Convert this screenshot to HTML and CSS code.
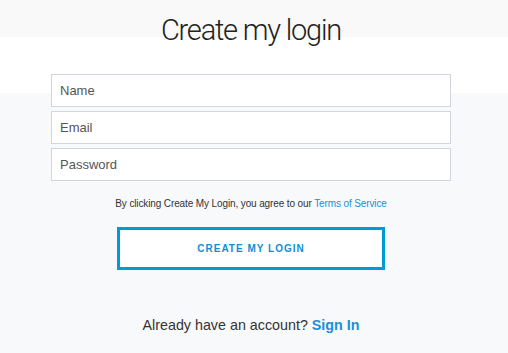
FILE: index.html
```html
<!DOCTYPE html>
<html lang="en">
  <head>
    <meta charset="UTF-8" />
    <meta name="viewport" content="width=device-width, initial-scale=1.0" />
    <title>Create my login</title>
    <link rel="stylesheet" href="styles.css">
  </head>
  <body>
    <div class="page">
      <h1>Create my login</h1>

      <form class="signup-form" onsubmit="return false">
        <input type="text" placeholder="Name" />
        <input type="email" placeholder="Email" />
        <input type="password" placeholder="Password" />

        <p class="terms">
          By clicking Create My Login, you agree to our
          <a href="#">Terms of Service</a>
        </p>

        <button class="create-btn" type="submit">Create my login</button>
      </form>

      <p class="signin">
        Already have an account? <a href="#">Sign In</a>
      </p>
    </div>
  </body>
</html>
```

FILE: styles.css
```css
body {
  font-family: "Liberation Sans", Arial, Helvetica, sans-serif;
  margin: 0;
  padding: 0;
  color: #333;
  background: linear-gradient(
    to bottom,
    #f9f9f9 0,
    #f9f9f9 37px,
    #ffffff 37px,
    #ffffff 93px,
    #f8f9fb 93px
  );
  min-height: 353px;
}

.page {
  width: 502px;
  display: flex;
  flex-direction: column;
  align-items: center;
}

h1 {
  font-family: Roboto, "Liberation Sans", sans-serif;
  font-weight: 300;
  font-size: 29px;
  letter-spacing: -1.2px;
  line-height: 36px;
  color: #222;
  margin: 0;
  padding-top: 12px;
}

.signup-form {
  width: 400px;
  margin-top: 26px;
  display: flex;
  flex-direction: column;
  align-items: center;
  gap: 4px;
}

.signup-form input {
  width: 100%;
  height: 33px;
  box-sizing: border-box;
  border: 1px solid #d4d4de;
  border-radius: 0;
  padding: 0 8px;
  font-family: "Liberation Sans", Arial, sans-serif;
  font-size: 13px;
  color: #333;
  background: #fff;
  outline: none;
}

.signup-form input::placeholder {
  color: #555;
}

.terms {
  font-size: 10px;
  letter-spacing: -0.12px;
  color: #333;
  margin: 11px 0 0;
  line-height: 16px;
}

.terms a,
.signin a {
  color: #1a8fd6;
  text-decoration: none;
}

.create-btn {
  margin-top: 11px;
  width: 268px;
  height: 43px;
  box-sizing: border-box;
  background: #fff;
  border: 3px solid #0099d9;
  color: #0f8fd3;
  font-family: "Liberation Sans", Arial, sans-serif;
  font-weight: bold;
  font-size: 10px;
  letter-spacing: 1px;
  text-transform: uppercase;
  cursor: pointer;
}

.signin {
  font-size: 14.3px;
  color: #333;
  margin: 47px 0 0;
}

.signin a {
  font-weight: bold;
}
```
